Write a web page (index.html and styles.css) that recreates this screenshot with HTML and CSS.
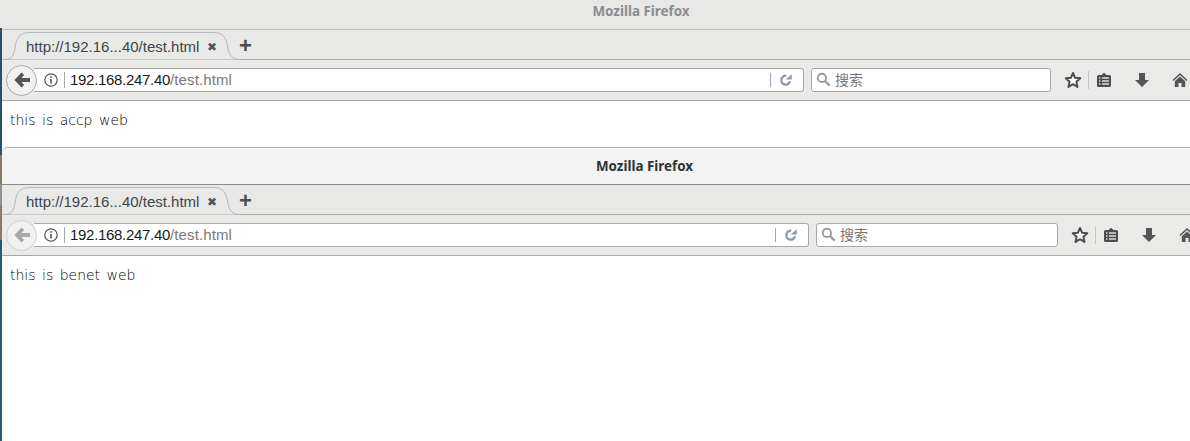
FILE: index.html
```html
<!DOCTYPE html>
<html>
<head>
    <title>Mozilla Firefox</title>
    <link rel="stylesheet" href="styles.css">
</head>
<body>
    <svg class="defs">
        <defs>
            <symbol id="tab-shape" viewBox="0 0 238 30">
                <path d="M0 29.500H3C10 29.500 12 25 13 18C14.500 8 17 2.500 28 2.500H211C222 2.500 224 8 226 18C227 25 230 29.500 238 29.500" fill="#e9e9e8" stroke="#b4b8bc"/>
            </symbol>
            <symbol id="i-back" viewBox="0 0 20 20">
                <path d="M9.500 2.500L2.500 10l7 7.500 2.600-2.500L9.400 12H18V8H9.400l2.700-3z" fill="currentColor"/>
            </symbol>
            <symbol id="i-info" viewBox="0 0 16 16">
                <circle cx="8" cy="8" r="6.200" fill="none" stroke="#555" stroke-width="1.200"/>
                <rect x="7.200" y="7" width="1.600" height="4.500" fill="#555"/>
                <rect x="7.200" y="4.200" width="1.600" height="1.600" fill="#555"/>
            </symbol>
            <symbol id="i-reload" viewBox="0 0 14 14">
                <path d="M11 8.200A4.400 4.400 0 1 1 7.200 2.800" fill="none" stroke="#8d9cb0" stroke-width="2.400"/>
                <path d="M6.500 6.500L12.800 1.200V6.500z" fill="#8d9cb0"/>
            </symbol>
            <symbol id="i-search" viewBox="0 0 16 16">
                <circle cx="6.300" cy="6.300" r="4.400" fill="none" stroke="#9a9a9a" stroke-width="2"/>
                <path d="M9.600 9.600L14.500 14.500" stroke="#9a9a9a" stroke-width="2.400"/>
            </symbol>
            <symbol id="i-star" viewBox="0 0 18 18">
                <path d="M9 2l2.100 4.800 5.200.5-3.900 3.500 1.100 5.100L9 13.200l-4.500 2.700 1.100-5.100-3.900-3.500 5.200-.5z" fill="#fff" stroke="#4d4d4d" stroke-width="2" stroke-linejoin="round"/>
            </symbol>
            <symbol id="i-list" viewBox="0 0 16 16">
                <path d="M5.500 3L8 .8 10.500 3h3q1.500 0 1.500 1.500v9q0 1.500-1.500 1.500h-11Q1 15 1 13.500v-9Q1 3 2.500 3z" fill="#4d4d4d"/>
                <path d="M3 5.200h1.500v1.600H3zM6 5.200h7v1.600H6zM3 8.200h1.500v1.600H3zM6 8.200h7v1.600H6zM3 11.200h1.500v1.600H3zM6 11.200h7v1.600H6z" fill="#dcdcdb"/>
            </symbol>
            <symbol id="i-down" viewBox="0 0 16 16">
                <path d="M5 1h6v7h4l-7 7-7-7h4z" fill="#555"/>
            </symbol>
            <symbol id="i-home" viewBox="0 0 16 16">
                <path d="M8 1L.5 8l1 1L8 3l6.500 6 1-1z" fill="#555"/>
                <path d="M8 4.500L2.800 9.300V15h3.700v-4h3v4h3.700V9.300z" fill="#555"/>
            </symbol>
        </defs>
    </svg>

    <div class="window first">
        <div class="titlebar">Mozilla Firefox</div>
        <div class="tabbar">
            <div class="tab">
                <svg class="tab-bg"><use href="#tab-shape"/></svg>
                <span class="tab-label">http://192.16...40/test.html</span>
                <span class="tab-close">✖</span>
            </div>
            <span class="new-tab">+</span>
        </div>
        <div class="navbar">
            <div class="back"><svg class="back-icon"><use href="#i-back"/></svg></div>
            <div class="urlbar">
                <svg class="info-icon"><use href="#i-info"/></svg>
                <span class="url"><b>192.168.247.40</b>/test.html</span>
                <svg class="reload-icon"><use href="#i-reload"/></svg>
            </div>
            <div class="searchbar">
                <svg class="search-icon"><use href="#i-search"/></svg>
                <span>搜索</span>
            </div>
            <div class="tools">
                <svg class="tool star"><use href="#i-star"/></svg>
                <span class="tool-sep"></span>
                <svg class="tool list"><use href="#i-list"/></svg>
                <svg class="tool down"><use href="#i-down"/></svg>
                <svg class="tool home"><use href="#i-home"/></svg>
            </div>
        </div>
        <div class="content">this is accp web</div>
    </div>

    <div class="window second">
        <div class="titlebar">Mozilla Firefox</div>
        <div class="tabbar">
            <div class="tab">
                <svg class="tab-bg"><use href="#tab-shape"/></svg>
                <span class="tab-label">http://192.16...40/test.html</span>
                <span class="tab-close">✖</span>
            </div>
            <span class="new-tab">+</span>
        </div>
        <div class="navbar">
            <div class="back"><svg class="back-icon"><use href="#i-back"/></svg></div>
            <div class="urlbar">
                <svg class="info-icon"><use href="#i-info"/></svg>
                <span class="url"><b>192.168.247.40</b>/test.html</span>
                <svg class="reload-icon"><use href="#i-reload"/></svg>
            </div>
            <div class="searchbar">
                <svg class="search-icon"><use href="#i-search"/></svg>
                <span>搜索</span>
            </div>
            <div class="tools">
                <svg class="tool star"><use href="#i-star"/></svg>
                <span class="tool-sep"></span>
                <svg class="tool list"><use href="#i-list"/></svg>
                <svg class="tool down"><use href="#i-down"/></svg>
                <svg class="tool home"><use href="#i-home"/></svg>
            </div>
        </div>
        <div class="content">this is benet web</div>
    </div>
</body>
</html>
```

FILE: styles.css
```css
html, body {
    margin: 0;
    height: 441px;
    overflow: hidden;
}
body {
    box-sizing: border-box;
    width: 1190px;
    padding-left: 2px;
    font-family: "Liberation Sans", Arial, sans-serif;
    background-color: #fff;
    background-image: linear-gradient(#e8e8e7 0, #e8e8e7 28px, #2e4f66 28px, #2e4f66 155px, #8a7a68 155px, #8a7a68 185px, #8d9297 185px, #8d9297 205px, #8a7a68 205px, #8a7a68 240px, #2b5a6f 240px);
    background-size: 2px 100%;
    background-repeat: no-repeat;
}
.defs {
    display: none;
}
.window {
    display: flex;
    flex-direction: column;
    width: 1188px;
    overflow: hidden;
}
.titlebar {
    display: flex;
    align-items: center;
    justify-content: center;
    box-sizing: border-box;
    font-family: "Noto Sans", sans-serif;
    font-size: 13.4px;
    font-weight: bold;
}
.first .titlebar {
    height: 30px;
    padding-left: 90px;
    padding-bottom: 7px;
    color: #8b8e8f;
    background-color: #e8e8e7;
    border-bottom: 1px solid #b9b9b7;
}
.second .titlebar {
    height: 38px;
    padding-left: 97px;
    color: #2e3436;
    background-color: #f3f3f3;
    border-top: 1px solid #b5b5b3;
    border-bottom: 1px solid #8a8a88;
    border-top-left-radius: 5px;
}
.tabbar {
    display: flex;
    align-items: flex-start;
    height: 30px;
    background-color: #e8e8e7;
    border-bottom: 1px solid #a8a8a6;
    box-sizing: border-box;
}
.tab {
    position: relative;
    display: flex;
    align-items: center;
    box-sizing: border-box;
    width: 238px;
    height: 30px;
    padding-top: 3px;
    font-size: 15px;
    color: #404547;
}
.tab-bg {
    position: absolute;
    left: 0;
    top: 0;
    width: 238px;
    height: 30px;
}
.tab-label {
    position: relative;
    margin-left: 24px;
    white-space: nowrap;
}
.tab-close {
    position: relative;
    margin-left: 8px;
    font-size: 12px;
    color: #555;
}
.new-tab {
    margin-left: -1px;
    font-size: 22px;
    font-weight: bold;
    line-height: 31px;
    color: #4d4d4d;
}
.navbar {
    display: flex;
    align-items: center;
    height: 41px;
    box-sizing: border-box;
    padding-left: 4px;
    background-color: #eaeae9;
    border-bottom: 1px solid #a8a8a6;
}
.back {
    position: relative;
    z-index: 1;
    display: flex;
    align-items: center;
    justify-content: center;
    box-sizing: border-box;
    width: 31px;
    height: 31px;
    flex-shrink: 0;
    background-color: #f1f1f0;
    border: 1px solid #a9a9a9;
    border-radius: 50%;
}
.back-icon {
    width: 20px;
    height: 20px;
    color: #555;
}
.second .back {
    border-color: #cfcfcf;
}
.second .back-icon {
    color: #a9a9a9;
}
.urlbar {
    display: flex;
    align-items: center;
    flex-shrink: 0;
    box-sizing: border-box;
    height: 24px;
    margin-left: -3px;
    padding-left: 9px;
    background-color: #fff;
    border: 1px solid #a8a8a8;
    border-left: none;
    border-radius: 0 3px 3px 0;
    font-size: 15px;
    letter-spacing: 0.1px;
    color: #7a7a7a;
}
.first .urlbar {
    width: 770px;
}
.second .urlbar {
    width: 775px;
}
.info-icon {
    width: 16px;
    height: 16px;
    flex-shrink: 0;
}
.url {
    margin-left: 5px;
    padding-left: 5px;
    border-left: 1px solid #a8a8a8;
    line-height: 16px;
    flex: 1;
}
.url b {
    font-weight: normal;
    letter-spacing: -0.3px;
    color: #1a1a1a;
}
.reload-icon {
    width: 14px;
    height: 14px;
    box-sizing: content-box;
    padding: 0 10px 0 8px;
    border-left: 1px solid #a8a8a8;
}
.searchbar {
    display: flex;
    align-items: center;
    flex-shrink: 0;
    box-sizing: border-box;
    height: 24px;
    margin-left: 7px;
    padding-left: 4px;
    padding-bottom: 2px;
    background-color: #fff;
    border: 1px solid #a8a8a8;
    border-radius: 3px;
    font-family: "Noto Sans CJK SC", sans-serif;
    font-size: 14px;
    color: #777;
}
.first .searchbar {
    width: 240px;
}
.second .searchbar {
    width: 242px;
}
.search-icon {
    width: 15px;
    height: 15px;
    margin-right: 4px;
}
.tools {
    display: flex;
    align-items: center;
    flex-shrink: 0;
}
.tool {
    width: 16px;
    height: 16px;
    flex-shrink: 0;
}
.star {
    width: 18px;
    height: 18px;
    margin-left: 13px;
}
.tool-sep {
    width: 1px;
    height: 18px;
    margin-left: 6px;
    background-color: #c4c4c3;
}
.list {
    margin-left: 7px;
}
.down {
    margin-left: 22px;
}
.home {
    margin-left: 22px;
}
.content {
    box-sizing: border-box;
    padding: 11px 0 0 8px;
    background-color: #fff;
    font-family: "DejaVu Sans", sans-serif;
    font-size: 14px;
    font-weight: 200;
    word-spacing: 2px;
    color: #000;
}
.first .content {
    height: 46px;
}
.second .content {
    height: 185px;
}
```
